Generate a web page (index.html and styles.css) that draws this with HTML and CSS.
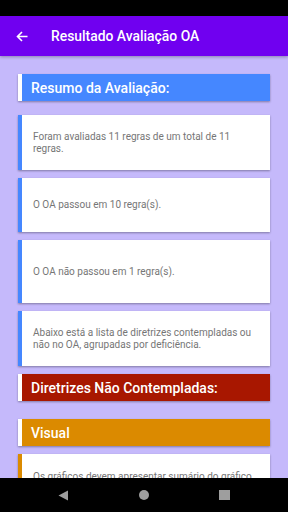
FILE: index.html
```html
<!DOCTYPE html>
<html lang="pt">
<head>
<meta charset="utf-8">
<link rel="stylesheet" href="styles.css">
</head>
<body>
<div class="screen">
  <div class="status-bar"></div>
  <header class="app-bar">
    <svg class="back" width="12" height="11" viewBox="0 0 12 11"><path d="M11.5 5.5H1.5M6 1L1.5 5.5L6 10" fill="none" stroke="#fff" stroke-width="1.6"/></svg>
    <h1 class="title">Resultado Avaliação OA</h1>
  </header>
  <main class="content">
    <div class="section-head head-blue">Resumo da Avaliação:</div>
    <div class="card card-blue card-h55 first">Foram avaliadas 11 regras de um total de 11 regras.</div>
    <div class="card card-blue card-h54">O OA passou em 10 regra(s).</div>
    <div class="card card-blue card-h62">O OA não passou em 1 regra(s).</div>
    <div class="card card-blue card-h55">Abaixo está a lista de diretrizes contempladas ou não no OA, agrupadas por deficiência.</div>
    <div class="section-head head-red">Diretrizes Não Contempladas:</div>
    <div class="section-head head-orange">Visual</div>
    <div class="card card-orange card-last">Os gráficos devem apresentar sumário do gráfico</div>
  </main>
  <nav class="nav-bar">
    <svg width="11" height="11" viewBox="0 0 11 11"><path d="M10 0.5V10.5L0.5 5.5Z" fill="#9e9e9e"/></svg>
    <svg width="10" height="10" viewBox="0 0 10 10"><circle cx="5" cy="5" r="5" fill="#9e9e9e"/></svg>
    <svg width="11" height="10" viewBox="0 0 11 10"><rect x="0" y="0" width="11" height="10" fill="#9e9e9e"/></svg>
  </nav>
</div>
</body>
</html>
```
FILE: styles.css
```css
* { box-sizing: border-box; }
html, body { margin: 0; padding: 0; }
body { font-family: Roboto, "Noto Sans", sans-serif; background: #000; }
.screen { width: 288px; height: 512px; display: flex; flex-direction: column; overflow: hidden; background: #c5b9fb; }
.status-bar { height: 16px; background: #000; flex: none; }
.app-bar { height: 40px; flex: none; background: #7000f0; display: flex; align-items: center; padding-left: 16px; box-shadow: 0 1px 3px rgba(0,0,0,0.3); position: relative; z-index: 1; }
.back { margin-top: 1px; }
.title { margin: 0 0 0 23px; font-size: 13.9px; font-weight: 500; color: #fff; }
.content { flex: 1; overflow: hidden; padding: 18px 18px 0 18px; display: flex; flex-direction: column; }
.section-head { height: 27px; flex: none; border-left: 4px solid #fff; color: #fff; font-size: 14px; font-weight: 500; display: flex; align-items: center; padding-left: 9px; box-shadow: 0 1px 2px rgba(0,0,0,0.35); }
.head-blue { background: #4587ff; }
.head-red { background: #a81700; margin-top: 8px; }
.head-orange { background: #db8a00; margin-top: 18px; }
.card { flex: none; background: #fff; border-left: 4px solid #4587ff; color: #767676; font-size: 10px; line-height: 11.5px; display: flex; align-items: center; padding: 0 12px 0 11px; box-shadow: 0 1px 2px rgba(0,0,0,0.35); margin-top: 8px; }
.card.first { margin-top: 14px; }
.card-orange { border-left-color: #db8a00; }
.card-h55 { height: 55px; }
.card-h54 { height: 54px; }
.card-h62 { height: 63px; }
.card-last { height: 55px; align-items: flex-start; padding-top: 17px; }
.nav-bar { height: 34px; flex: none; background: #000; display: flex; align-items: center; justify-content: space-between; padding: 0 58px 0 58px; }
```
